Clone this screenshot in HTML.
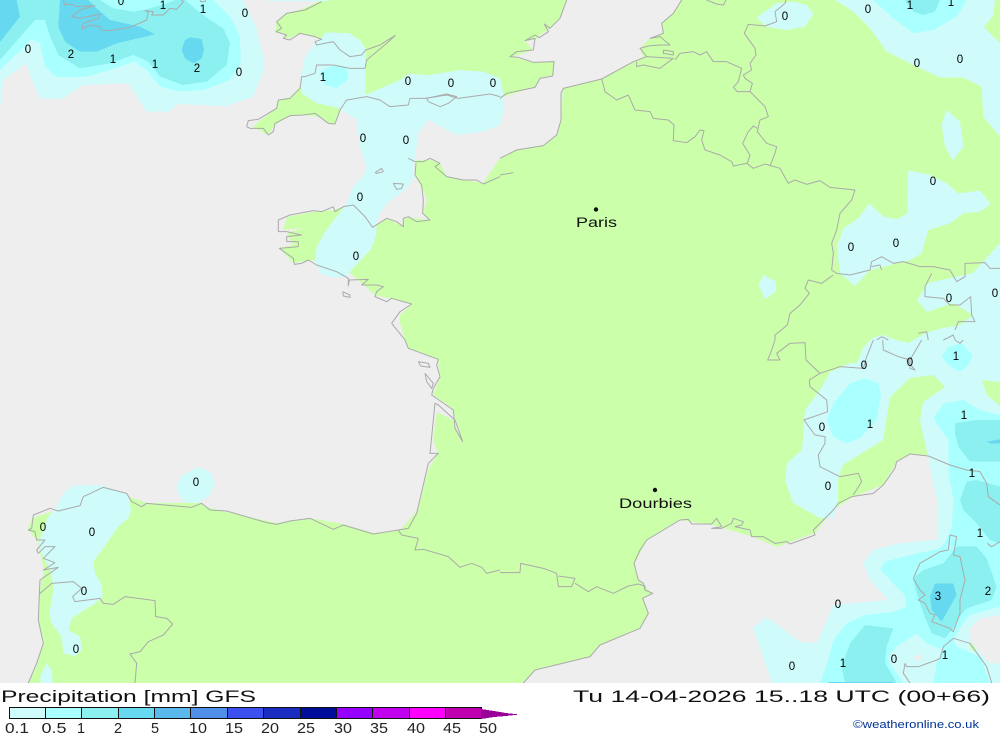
<!DOCTYPE html>
<html><head><meta charset="utf-8"><title>Precipitation GFS</title>
<style>
html,body{margin:0;padding:0;background:#fff;width:1000px;height:733px;overflow:hidden}
svg{display:block;position:absolute;left:0;top:0}
.a{fill:#d0fbfb}.b{fill:#aaffff}.c{fill:#8cf0f0}.d{fill:#66d8f0}.l{fill:#ccffaa}.s{fill:#eeeeee}
polygon{shape-rendering:crispEdges}
.k polyline{fill:none;stroke:#aaaaaa;stroke-width:3;stroke-linejoin:round;shape-rendering:auto}
text{font-family:"Liberation Sans",sans-serif;fill:#111}
.n text{font-size:11.5px;text-anchor:middle;fill:#000}
.t{font-size:17px}
.v{font-size:14.5px;text-anchor:middle;fill:#222}
</style></head><body>
<svg width="1000" height="733" viewBox="0 0 1000 733" xmlns="http://www.w3.org/2000/svg">
<rect width="1000" height="733" fill="#fff"/>
<rect width="1000" height="683" fill="#eeeeee"/>
<!-- land -->
<polygon class="l" points="682,0 673,13 662,23 663,33 648,40 640,48 643,57 633,62 602,79 563,88 561,120 557,135 543,146 517,150 500,158 483,183 447,177 440,163 430,160 416,160 416,177 423,190 427,200 423,213 430,220 412,218 405,217 403,227 387,218 373,227 353,205 333,210 313,212 287,217 283,230 302,228 287,233 293,245 279,248 293,263 315,260 350,273 375,295 412,304 400,315 400,323 405,340 408,348 438,360 440,378 433,395 452,408 463,442 457,430 453,420 437,412 433,440 438,453 428,470 418,510 400,530 373,533 343,524 310,518 277,523 227,512 207,507 200,503 147,503 130,497 103,487 57,510 32,518 28,530 37,540 43,565 43,575 40,590 39,620 43,643 37,665 28,683 523,683 535,670 590,657 600,645 640,628 648,613 643,598 652,593 643,585 638,580 635,563 647,540 680,520 713,525 753,537 777,547 790,542 815,533 833,510 853,497 883,485 897,462 910,454 928,455 1000,480 1000,0"/>
<polygon class="l" points="322,0 567,0 560,18 548,30 540,35 535,40 525,41 533,50 512,57 533,62 554,62 554,75 540,78 535,87 500,98 367,96 340,108 335,124 330,124 320,117 303,115 290,116 275,125 268,135 253,127 258,122 277,108 278,100 290,97 300,87 310,60 324,42 315,37 300,33 290,38 283,38 285,33 276,33 276,22 286,13 300,10"/>
<!-- NW precipitation -->
<g transform="scale(.33333)">
<polygon class="a" points="0,325 10,240 80,190 95,240 120,295 190,295 250,255 385,250 440,335 510,335 530,312 680,318 760,290 790,215 790,170 770,85 730,0 0,0"/>
<polygon class="a" points="800,0 990,0 985,3 810,3"/>
<polygon class="b" points="0,210 95,118 120,130 135,200 170,232 260,230 330,210 405,185 440,210 480,260 540,275 610,270 690,240 722,190 720,110 690,50 640,0 0,0"/>
<polygon class="c" points="0,180 105,60 135,60 150,110 175,165 240,205 330,190 400,165 445,185 480,230 550,255 620,245 680,195 690,130 670,85 630,60 590,30 555,0 0,0"/>
<polygon class="b" points="300,0 340,25 400,35 440,28 500,10 525,0"/>
<polygon class="d" points="0,0 50,0 60,50 5,120 0,125"/>
<polygon class="d" points="180,0 175,80 195,125 240,155 290,155 350,130 465,103 420,80 330,60 290,25 265,0"/>
<polygon class="d" points="545,150 555,120 570,112 605,117 612,150 605,175 580,190 555,175"/>
<!-- Channel -->
<polygon class="a" points="980,97 1050,100 1085,125 1097,150 1097,285 1130,270 1200,240 1225,222 1290,225 1380,210 1450,215 1500,235 1510,280 1509,340 1500,375 1450,395 1370,405 1285,360 1255,400 1245,470 1240,520 1245,530 1215,570 1160,610 1140,640 1130,665 1130,700 1115,745 1050,815 1040,830 1000,832 960,820 945,780 950,740 975,695 1025,630 1040,610 1060,560 1095,520 1100,500 1080,440 1070,360 1040,340 1020,325 950,310 905,280 902,240 915,170 945,130"/>
<polygon class="b" points="960,215 1000,195 1040,205 1047,235 1010,265 975,255"/>
</g>
<!-- Spain -->
<g transform="translate(0 340) scale(.33333)">
<polygon class="a" points="165,510 190,460 220,437 310,437 385,465 393,510 385,535 355,560 320,610 280,665 285,700 305,735 308,770 285,790 215,835 205,870 240,890 245,930 225,948 190,940 185,890 155,850 148,820 160,750 155,700 130,650 115,610 145,530"/>
<polygon class="a" points="140,970 155,990 158,1029 122,1029 122,1005"/>
<polygon class="a" points="530,435 545,405 595,382 630,395 645,432 625,470 590,490 550,485 535,460"/>
</g>
<!-- NE -->
<g transform="translate(500 0) scale(.33333)">
<polygon class="a" points="1005,0 1060,35 1110,85 1160,155 1240,195 1320,233 1390,233 1445,260 1450,350 1500,410 1500,130 1452,82 1480,45 1485,0"/>
<polygon class="b" points="1120,0 1180,55 1240,100 1300,90 1370,50 1400,0"/>
<polygon class="c" points="1215,0 1240,35 1270,45 1305,35 1320,0"/>
<polygon class="a" points="770,52 830,10 880,5 920,15 940,42 915,80 860,90 800,80"/>
<polygon class="a" points="1330,360 1340,330 1380,365 1390,440 1358,482 1335,440 1325,375"/>
<polygon class="a" points="1225,510 1290,525 1340,550 1375,580 1440,572 1472,612 1440,635 1390,640 1350,670 1285,690 1265,760 1230,780 1110,810 1065,858 1020,820 1010,740 1030,685 1075,655 1108,610 1150,650 1190,658 1222,640"/>
<polygon class="a" points="790,825 828,845 828,875 795,897 775,855"/>
</g>
<!-- Alps / Italy / Med base -->
<polygon class="a" points="1000,243 973,273 928,283 917,300 927,312 953,303 973,315 960,325 943,328 928,332 908,343 893,339 883,335 872,338 863,348 857,363 850,363 830,372 820,390 805,410 802,450 787,463 785,480 793,503 820,518 833,518 838,503 838,480 843,465 883,440 890,397 910,378 933,375 945,387 923,402 920,420 928,457 937,500 937,540 900,543 873,550 863,563 870,580 888,600 833,605 828,617 817,643 800,642 767,617 753,628 763,657 772,683 1000,683"/>
<g transform="translate(500 340) scale(.33333)">
<polygon class="b" points="1300,235 1330,190 1390,180 1440,210 1500,225 1500,1029 960,1029 985,960 1000,900 1040,850 1095,825 1180,815 1218,800 1215,765 1175,725 1140,690 1155,665 1230,645 1320,625 1340,600 1355,560 1360,480 1345,400 1345,300"/>
<polygon class="b" points="1325,50 1345,20 1385,10 1418,45 1405,75 1380,95 1345,75"/>
<polygon class="b" points="980,240 1000,190 1050,130 1095,115 1135,130 1143,165 1130,240 1080,295 1040,310 1000,290"/>
<polygon class="c" points="1365,250 1430,240 1500,240 1500,365 1410,365 1375,320 1365,280"/>
<polygon class="c" points="1380,480 1400,425 1430,420 1500,440 1500,610 1470,600 1430,550 1390,510"/>
<polygon class="d" points="1460,305 1500,298 1500,310 1470,310"/>
</g>
<g transform="translate(750 500) scale(.33333)">
<polygon class="c" points="275,500 300,430 345,375 430,385 410,440 405,490 430,530 440,549 285,549"/>
<polygon class="c" points="495,230 520,210 580,190 620,140 680,140 710,175 740,260 725,300 650,325 625,355 610,385 585,415 545,400 520,340 500,280 490,240"/>
<polygon class="d" points="540,290 555,250 610,250 620,285 575,365 545,330"/>
<polygon class="d" points="235,546 430,546 430,549 235,549"/>
<polygon class="a" points="440,440 500,400 530,430 580,450 560,490 550,549 460,549 420,490 415,470"/>
<polygon class="s" points="490,470 505,462 515,475 505,487"/>
<polygon class="a" points="635,375 660,345 750,320 750,549 720,549 690,470 620,440 610,420"/>
<polygon class="s" points="660,385 690,355 750,345 750,490 720,490 700,470 680,445 660,420"/>
<polygon class="l" points="655,430 670,435 682,458 665,450"/>
</g>
<polygon class="l" points="982,380 1000,382 1000,406 987,395"/>
<!-- coast lines -->
<g class="k">
<g transform="scale(.33333)">
<polyline points="190,0 195,15 215,12 230,20 285,17 240,30 215,50 240,55 300,42 295,55 250,70 245,88 270,75 300,80 305,90 330,92 390,82 440,60 445,35 435,32 460,35 455,45 490,45 510,25 530,28 550,5 545,0"/>
<polyline points="600,0 602,5 615,5 617,0"/>
<polyline points="965,5 915,30 860,40 830,65 845,85 828,95 860,105 850,115 870,120 900,100 945,110 965,118 945,125 950,135 1000,125 1020,150 1050,170 1085,165 1097,150 1140,135 1186,106 1160,130 1100,180 1095,205 1050,205 1000,195 950,195 945,220 915,230 905,230 900,265 870,295 835,300 830,325 775,358 745,362 740,380 750,385 790,385 805,405 820,395 825,370 870,347 910,345 945,340 985,370 1005,372 1020,330 1040,300 1100,290 1140,300 1170,320 1225,315 1230,295 1275,295 1340,285 1375,295 1470,282 1500,290"/>
<polyline points="1280,295 1340,282 1370,290 1345,310 1320,320 1285,305 1280,295"/>
<polyline points="1125,518 1145,505 1150,515 1130,520 1125,518"/>
<polyline points="1180,550 1210,552 1205,565 1190,568 1180,550"/>
<polyline points="1225,475 1245,485 1270,485 1290,475 1320,490 1305,500 1340,530 1390,540 1430,540 1450,552 1500,530"/>
<polyline points="1248,490 1245,525 1265,555 1270,600 1268,640 1290,660 1250,665 1225,650 1210,655 1210,680 1190,665 1160,655 1118,682 1095,650 1060,615 1030,620 1005,635 1000,620 965,635 940,632 870,645 835,660 835,695 860,695 905,705 860,710 860,725 895,725 895,740 838,745 880,775 883,793 905,790 925,780 950,795 1010,815 1045,835 1045,858 1048,840 1105,838 1085,855 1130,855 1150,860 1130,875 1125,890 1160,905 1175,895 1235,912 1200,935 1175,970 1215,1020"/>
<polyline points="1028,875 1050,885 1050,892 1030,888 1028,875"/>
</g>
<g transform="translate(500 0) scale(.33333)">
<polyline points="0,295 20,280 105,262 120,235 158,228 162,185 100,187 55,172 30,170 50,155 100,150 105,115 75,122 105,105 118,113 145,95 133,72 150,85 180,55 200,0"/>
<polyline points="0,525 40,518"/>
<polyline points="0,475 50,450 130,437 170,405 183,360 183,280 190,265 305,237 400,185 440,170 520,175 480,205 430,195 410,200 410,185"/>
<polyline points="440,170 420,145 445,138 480,135 510,135 480,110 450,115 490,100 485,70 520,40 545,0"/>
<polyline points="490,150 520,155 520,165 490,160 490,150"/>
<polyline points="305,237 315,275 350,300 385,285 405,330 450,335 460,355 505,360 522,375 520,422 560,428 585,410 600,390 612,392 605,420 615,450 660,465 695,485 700,498 740,490 760,505 795,492 840,505 865,550 885,540 920,553 960,542 990,562 1065,570 1055,600 1020,640 1010,690 995,730 1000,760 995,810 1010,820"/>
<polyline points="525,180 540,160 580,155 600,165 620,155 640,185 680,185 725,205 715,245 700,262 712,275 750,275 757,250 735,235 730,225 755,210 750,190 768,165 765,145 733,100 745,73 795,78 830,65 825,35 855,10 858,0"/>
<polyline points="620,0 650,12 670,15 678,0"/>
<polyline points="750,275 795,320 805,350 780,360 772,395 800,430 830,440 825,460 810,498"/>
<polyline points="772,385 760,378 745,395 728,430 750,465 742,490"/>
<polyline points="1010,820 1050,825 1110,810 1115,785 1145,770 1180,790 1210,785 1260,800 1300,800 1350,810 1370,845 1395,830 1395,790 1455,788 1470,805 1500,805"/>
<polyline points="1115,800 1140,795 1145,810"/>
<polyline points="1000,825 965,850 925,840 915,865 928,880 900,915 870,940 862,975 825,1005 825,1020"/>
<polyline points="1295,820 1275,860 1275,890 1330,895 1350,915 1380,915 1412,890 1415,945 1425,965 1375,965 1365,990"/>
<polyline points="1255,1000 1280,995 1285,1020"/>
<polyline points="1130,1020 1145,1010 1165,1020"/>
<polyline points="1330,1020 1360,1005 1365,1020"/>
</g>
<g transform="translate(0 340) scale(.33333)">
<polyline points="1215,0 1225,25 1315,58 1310,75 1320,110 1300,145 1295,165 1360,210 1365,265 1388,305 1365,240 1315,195 1305,190 1290,340 1315,340 1285,370 1250,520 1225,565 1195,570 1120,582 1030,555 1000,568 930,535 870,543 830,553 800,548 680,513 630,510 605,490 575,502 440,490 425,500 395,485 380,460 310,442 250,470 240,497 175,513 150,505 100,525 95,565 85,570 105,575 110,600 135,600 110,630 115,640 135,620 165,620 130,655 165,668 130,690 175,682 120,720 118,762 115,840 130,910 110,970 85,1029"/>
<polyline points="1255,65 1285,70 1290,82 1262,78 1255,65"/>
<polyline points="1275,100 1300,130 1295,145 1280,125 1275,100"/>
<polyline points="118,762 155,730 220,725 245,745 218,770 225,785 300,775 310,790 340,793 375,770 465,782 467,830 500,835 518,852 490,885 445,905 420,935 390,942 410,970 405,1029"/>
<polyline points="1195,570 1205,585 1255,595 1245,630 1270,628 1345,650 1380,682 1415,670 1445,682 1460,700 1500,690"/>
</g>
<g transform="translate(500 340) scale(.33333)">
<polyline points="825,0 815,30 803,60 840,60 830,40 870,10 915,8 918,60 960,100 928,120 930,140 980,180 983,215 912,240 945,285 975,290 975,310 955,345 960,380 1020,410 1075,400 1085,425 1060,465"/>
<polyline points="1120,0 1100,50 1090,85 1020,80 960,100"/>
<polyline points="1148,0 1150,30 1195,50 1230,60 1265,0"/>
<polyline points="1230,60 1230,85 1245,90 1220,60"/>
<polyline points="1365,0 1380,10 1390,0"/>
<polyline points="70,1029 105,990 270,950 300,915 420,865 445,820 428,775 458,760 435,750 430,730 415,720 402,670 420,630 440,600 540,540 565,538 575,552 635,552 650,535 665,560 635,565 665,565 695,550 700,535 730,545 725,555 705,560 750,570 755,590 790,590 825,610 860,605 870,612 945,585 940,570 970,540 1000,510 1015,490 1055,470 1120,460 1150,435 1185,385 1190,365 1230,342 1285,348 1350,375 1400,390 1440,395 1460,430 1465,470 1500,495"/>
<polyline points="0,698 60,698 62,670 130,685 170,700 175,740 215,740 225,715 175,708"/>
<polyline points="225,730 265,755 290,740 340,760 385,738 415,732 435,738 435,750"/>
</g>
<g transform="translate(750 500) scale(.33333)">
<polyline points="600,105 595,150 570,155 510,190 490,235 510,270 525,285 505,300 525,310 540,340 555,345 545,365 600,385 610,395 630,340 630,300 645,240 630,170 610,165 620,110 600,105"/>
<polyline points="465,490 470,500 505,500 560,480 570,475 580,440 610,415 660,430 680,458 710,500 725,549"/>
<polyline points="465,490 460,520 480,549"/>
<polyline points="712,130 725,140 750,125"/>
</g>
</g>
<!-- contour labels -->
<g class="n">
<text x="121" y="5">0</text><text x="163" y="9">1</text><text x="203" y="13">1</text><text x="245" y="17">0</text>
<text x="28" y="53">0</text><text x="71" y="58">2</text><text x="113" y="63">1</text><text x="155" y="68">1</text><text x="197" y="72">2</text><text x="239" y="76">0</text>
<text x="323" y="81">1</text><text x="408" y="85">0</text><text x="451" y="87">0</text><text x="493" y="87">0</text>
<text x="363" y="142">0</text><text x="406" y="144">0</text><text x="360" y="201">0</text><text x="356" y="260">0</text>
<text x="196" y="486">0</text><text x="43" y="531">0</text><text x="92" y="536">0</text><text x="84" y="595">0</text><text x="76" y="653">0</text>
<text x="785" y="20">0</text><text x="868" y="13">0</text><text x="910" y="9">1</text><text x="951" y="6">1</text><text x="917" y="67">0</text><text x="960" y="63">0</text>
<text x="933" y="185">0</text><text x="851" y="251">0</text><text x="896" y="247">0</text><text x="949" y="302">0</text><text x="995" y="297">0</text>
<text x="910" y="366">0</text><text x="864" y="369">0</text><text x="956" y="360">1</text><text x="964" y="419">1</text><text x="870" y="428">1</text><text x="822" y="431">0</text>
<text x="972" y="477">1</text><text x="828" y="490">0</text><text x="980" y="537">1</text><text x="838" y="608">0</text><text x="938" y="600">3</text><text x="988" y="595">2</text>
<text x="945" y="659">1</text><text x="894" y="663">0</text><text x="843" y="667">1</text><text x="792" y="670">0</text>
</g>
<!-- cities -->
<circle cx="596" cy="209.500" r="2.200" fill="#111"/>
<text x="576" y="227" font-size="14" textLength="41" lengthAdjust="spacingAndGlyphs">Paris</text>
<circle cx="655" cy="490" r="2.200" fill="#111"/>
<text x="619" y="508" font-size="14" textLength="73" lengthAdjust="spacingAndGlyphs">Dourbies</text>
<!-- footer -->
<text class="t" x="1" y="702" textLength="255" lengthAdjust="spacingAndGlyphs">Precipitation [mm] GFS</text>
<text class="t" x="573" y="702" textLength="417" lengthAdjust="spacingAndGlyphs">Tu 14-04-2026 15..18 UTC (00+66)</text>
<text x="853" y="728" font-size="11px" style="fill:#003399" textLength="126" lengthAdjust="spacingAndGlyphs">©weatheronline.co.uk</text>
<g stroke="#111" stroke-width="1" shape-rendering="crispEdges">
<rect x="9.500" y="707.500" width="36" height="11" fill="#d0fbfb"/>
<rect x="45.500" y="707.500" width="36" height="11" fill="#aaffff"/>
<rect x="81.500" y="707.500" width="37" height="11" fill="#8cf0f0"/>
<rect x="118.500" y="707.500" width="36" height="11" fill="#66d8f0"/>
<rect x="154.500" y="707.500" width="36" height="11" fill="#5bb8ec"/>
<rect x="190.500" y="707.500" width="37" height="11" fill="#5090e8"/>
<rect x="227.500" y="707.500" width="36" height="11" fill="#3c50f0"/>
<rect x="263.500" y="707.500" width="37" height="11" fill="#1a2dc0"/>
<rect x="300.500" y="707.500" width="36" height="11" fill="#000d9b"/>
<rect x="336.500" y="707.500" width="36" height="11" fill="#9600ff"/>
<rect x="372.500" y="707.500" width="37" height="11" fill="#c000ee"/>
<rect x="409.500" y="707.500" width="36" height="11" fill="#ff00ff"/>
<rect x="445.500" y="707.500" width="36" height="11" fill="#c000b0"/>
</g>
<polygon points="481,709 494,711 506,713 519,714.500 506,716 494,717 481,719" fill="#990099"/>
<text class="v" x="17" y="733" textLength="24" lengthAdjust="spacingAndGlyphs">0.1</text><text class="v" x="54" y="733" textLength="25" lengthAdjust="spacingAndGlyphs">0.5</text><text class="v" x="81" y="733">1</text>
<text class="v" x="118" y="733">2</text><text class="v" x="155" y="733">5</text><text class="v" x="198" y="733" textLength="18" lengthAdjust="spacingAndGlyphs">10</text>
<text class="v" x="234" y="733" textLength="18" lengthAdjust="spacingAndGlyphs">15</text><text class="v" x="270" y="733" textLength="18" lengthAdjust="spacingAndGlyphs">20</text><text class="v" x="306" y="733" textLength="18" lengthAdjust="spacingAndGlyphs">25</text>
<text class="v" x="343" y="733" textLength="18" lengthAdjust="spacingAndGlyphs">30</text><text class="v" x="379" y="733" textLength="18" lengthAdjust="spacingAndGlyphs">35</text><text class="v" x="416" y="733" textLength="18" lengthAdjust="spacingAndGlyphs">40</text>
<text class="v" x="452" y="733" textLength="18" lengthAdjust="spacingAndGlyphs">45</text><text class="v" x="488" y="733" textLength="18" lengthAdjust="spacingAndGlyphs">50</text>
</svg>
</body></html>
